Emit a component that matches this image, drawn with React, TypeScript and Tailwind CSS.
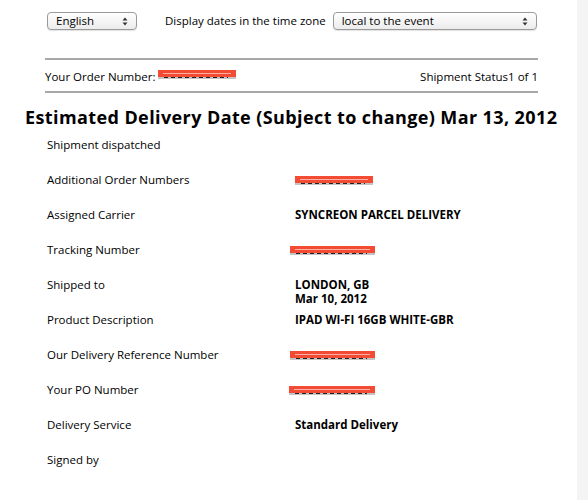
import React from 'react';

const FONT = { fontFamily: '"Open Sans", "DejaVu Sans", sans-serif' };

const UpDown = () => (
  <svg width="6" height="9" viewBox="0 0 6 9" className="shrink-0">
    <path d="M3 0.5 L5.5 3.5 H0.5 Z" fill="#333" />
    <path d="M3 8.5 L5.5 5.5 H0.5 Z" fill="#333" />
  </svg>
);

const Select = ({ label, width }: { label: string; width: string }) => (
  <div
    className={`${width} h-[18px] flex items-center justify-between pl-[8px] pr-[8px] rounded-[4px] border border-[#9a9a9a] bg-gradient-to-b from-white to-[#ececec] shadow-[0_1px_1px_rgba(0,0,0,0.12)] text-[11.5px] text-black`}
  >
    <span className="leading-none">{label}</span>
    <UpDown />
  </div>
);

// blacked-out (well, red-ed out) numbers
const Redacted = ({ width }: { width: string }) => (
  <span className={`relative inline-block align-top ${width} h-[7px] mt-[3px] bg-[#f44b35] shadow-[0_2px_0_#c4c4c4]`}>
    <span className="absolute left-[5px] right-[5px] top-[3px] h-px bg-[#ffb0a4]" />
    <span className="absolute left-[6px] right-[8px] -bottom-[1px] h-px bg-[repeating-linear-gradient(90deg,#222_0_4px,transparent_4px_7px)]" />
  </span>
);

const ROWS: { label: string; value?: React.ReactNode }[] = [
  { label: 'Shipment dispatched' },
  { label: 'Additional Order Numbers', value: <Redacted width="w-[78px]" /> },
  { label: 'Assigned Carrier', value: 'SYNCREON PARCEL DELIVERY' },
  { label: 'Tracking Number', value: <span className="-ml-[5px]"><Redacted width="w-[85px]" /></span> },
  {
    label: 'Shipped to',
    value: (
      <span className="flex flex-col leading-[14px]">
        <span>LONDON, GB</span>
        <span>Mar 10, 2012</span>
      </span>
    ),
  },
  { label: 'Product Description', value: 'IPAD WI-FI 16GB WHITE-GBR' },
  { label: 'Our Delivery Reference Number', value: <span className="-ml-[5px]"><Redacted width="w-[85px]" /></span> },
  { label: 'Your PO Number', value: <span className="-ml-[6px]"><Redacted width="w-[86px]" /></span> },
  { label: 'Delivery Service', value: 'Standard Delivery' },
  { label: 'Signed by' },
];

export default function App() {
  return (
    <div className="flex min-h-[500px] bg-white text-black" style={FONT}>
      <div className="w-[577px] shrink-0">
        {/* preferences */}
        <div className="flex items-center pl-[47px] pt-[12px]">
          <Select label="English" width="w-[90px]" />
          <span className="ml-[28px] text-[11.5px] leading-none">Display dates in the time zone</span>
          <div className="ml-[7px]">
            <Select label="local to the event" width="w-[204px]" />
          </div>
        </div>

        {/* order header */}
        <div className="ml-[45px] w-[493px] mt-[28px] border-t-2 border-b-2 border-[#a8a8a8]">
          <div className="flex items-center justify-between h-[31px] pt-[3px] text-[11.5px]">
            <span className="flex items-center">
              Your Order Number:
              <span className="ml-[2px] -mt-[3px]">
                <Redacted width="w-[78px]" />
              </span>
            </span>
            <span>Shipment Status1 of 1</span>
          </div>
        </div>

        <h1 className="ml-[25px] mt-[13px] text-[18px] leading-[22px] font-bold tracking-[0.4px] whitespace-nowrap">
          Estimated Delivery Date (Subject to change) Mar 13, 2012
        </h1>

        <div className="mt-[10px] pl-[47px]">
          {ROWS.map((r) => (
            <div key={r.label} className="grid grid-cols-[248px_1fr] h-[35px] text-[11.5px] leading-[13px]">
              <span>{r.label}</span>
              <span className="font-bold">{r.value}</span>
            </div>
          ))}
        </div>
      </div>
      <div className="flex-1 bg-[#f4f4f4]" />
    </div>
  );
}
